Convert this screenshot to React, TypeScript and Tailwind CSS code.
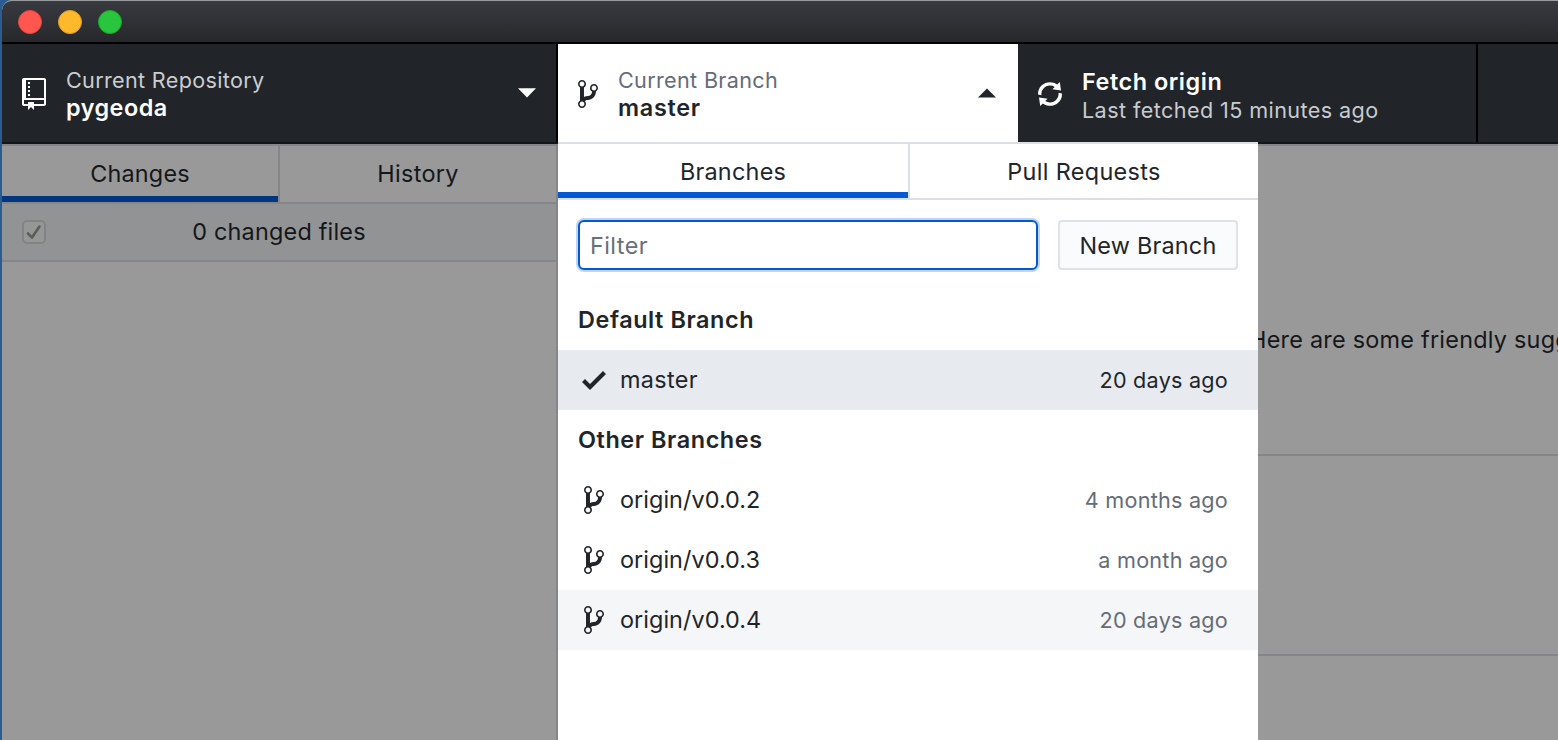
import type { ReactNode } from "react";

const paths = {
  repo: "M4 9H3V8h1v1zm0-3H3v1h1V6zm0-2H3v1h1V4zm0-2H3v1h1V2zm8-1v12c0 .55-.45 1-1 1H6v2l-1.5-1.5L3 16v-2H1c-.55 0-1-.45-1-1V1c0-.55.45-1 1-1h10c.55 0 1 .45 1 1zm-1 10H1v2h2v-1h3v1h5v-2zm0-10H2v9h9V1z",
  branch:
    "M10 5c0-1.11-.89-2-2-2a1.993 1.993 0 0 0-1 3.72v.3c-.02.52-.23.98-.63 1.38-.4.4-.86.61-1.38.63-.83.02-1.48.16-2 .45V4.72a1.993 1.993 0 0 0-1-3.72C.88 1 0 1.89 0 3a2 2 0 0 0 1 1.72v6.56c-.59.35-1 .99-1 1.72 0 1.11.89 2 2 2 1.11 0 2-.89 2-2 0-.53-.2-1-.53-1.36.09-.06.48-.41.59-.47.25-.11.56-.17.94-.17 1.05-.05 1.95-.45 2.75-1.25S8.95 7.77 9 6.73h-.02C9.59 6.37 10 5.73 10 5zM2 1.8c.66 0 1.2.55 1.2 1.2 0 .65-.55 1.2-1.2 1.2C1.35 4.2.8 3.65.8 3c0-.65.55-1.2 1.2-1.2zm0 12.41c-.66 0-1.2-.55-1.2-1.2 0-.65.55-1.2 1.2-1.2.65 0 1.2.55 1.2 1.2 0 .65-.55 1.2-1.2 1.2zm6-8c-.66 0-1.2-.55-1.2-1.2 0-.65.55-1.2 1.2-1.2.65 0 1.2.55 1.2 1.2 0 .65-.55 1.2-1.2 1.2z",
  sync: "M10.24 7.4a4.15 4.15 0 0 1-1.2 3.6 4.346 4.346 0 0 1-5.41.54L4.8 10.4.5 9.8l.6 4.2 1.31-1.26c2.36 1.74 5.7 1.57 7.84-.54a5.876 5.876 0 0 0 1.74-4.46l-1.75-.34zM2.96 5a4.346 4.346 0 0 1 5.41-.54L7.2 5.6l4.3.6-.6-4.2-1.31 1.26c-2.36-1.74-5.7-1.57-7.85.54C.5 5.03-.06 6.65.01 8.26l1.75.35A4.17 4.17 0 0 1 2.96 5z",
  check: "M12 5l-8 8-4-4 1.5-1.5L4 10l6.5-6.5L12 5z",
};

function Icon({ name, className = "" }: { name: keyof typeof paths; className?: string }) {
  const w = name === "branch" ? 10 : 12;
  return (
    <svg width={w * 2} height={32} viewBox={`0 0 ${w} 16`} fill="currentColor" className={`shrink-0 ${className}`}>
      <path fillRule="evenodd" d={paths[name]} />
    </svg>
  );
}

function Caret({ up = false }: { up?: boolean }) {
  return (
    <svg width="18" height="10" viewBox="0 0 18 10" fill="currentColor" className="mt-[44px]">
      <path d={up ? "M0 9.5 9 .5l9 9z" : "M0 .3l9 9.2 9-9.2z"} />
    </svg>
  );
}

function Section({ children }: { children: ReactNode }) {
  return <h2 className="h-[60px] pl-5 text-[23.4px] leading-[59px] font-semibold tracking-[0.58px]">{children}</h2>;
}

interface BranchRowProps {
  icon: "check" | "branch";
  name: string;
  date: string;
  nameClass: string;
  className: string;
}

function BranchRow({ icon, name, date, nameClass, className }: BranchRowProps) {
  return (
    <li className={`flex h-[60px] items-center pr-[30px] pl-6 ${className}`}>
      <span className={icon === "branch" ? "flex w-[38px] pl-[2px]" : "flex w-[38px]"}>
        <Icon name={icon} />
      </span>
      <span className={`flex-1 pb-[2px] leading-[57px] text-[#212529] ${nameClass}`}>{name}</span>
      <span className="text-[21.6px] leading-[60px] tracking-[0.24px]">{date}</span>
    </li>
  );
}

export default function App() {
  return (
    <div className="h-[740px] w-[1558px] overflow-hidden bg-[#2b5c91] pl-[2px] font-['Inter',sans-serif] text-[23.4px] leading-[29px] whitespace-nowrap text-[#212529]">
      <div className="flex h-full flex-col overflow-hidden rounded-tl-[10px] bg-[#999999]">
        <header className="flex h-11 shrink-0 items-center gap-4 rounded-tl-[10px] border-t border-b-2 border-t-[#999c9f] border-b-black bg-linear-to-b from-[#383a40] to-[#27282c] pl-4">
          <span className="size-6 rounded-full border border-[#e2463f] bg-[#ff5750]" />
          <span className="size-6 rounded-full border border-[#dfa023] bg-[#fdb92b]" />
          <span className="size-6 rounded-full border border-[#1aab29] bg-[#29c53c]" />
        </header>

        <nav className="flex h-[98px] shrink-0 bg-[#212428] text-white">
          <div className="flex w-[556px] border-r-2 border-black pr-5 pl-5">
            <Icon name="repo" className="mt-[34px]" />
            <div className="ml-5 flex-1 pt-[23px]">
              <p className="text-[21.6px] leading-[26px] tracking-[0.32px] text-[#cacdd1]">Current Repository</p>
              <p className="font-semibold tracking-[0.5px]">pygeoda</p>
            </div>
            <Caret />
          </div>
          <div className="flex w-[460px] bg-white pr-[22px] pl-5 text-[#212529]">
            <Icon name="branch" className="mt-[34px]" />
            <div className="ml-5 flex-1 pt-[23px]">
              <p className="text-[21.6px] leading-[26px] tracking-[0.33px] text-[#646c78]">Current Branch</p>
              <p className="font-semibold tracking-[0.7px]">master</p>
            </div>
            <Caret up />
          </div>
          <div className="flex w-[460px] border-r-2 border-black pl-5">
            <Icon name="sync" className="mt-[34px]" />
            <div className="ml-5 pt-[23px]">
              <p className="font-semibold tracking-[0.55px]">Fetch origin</p>
              <p className="text-[21.6px] leading-[28px] tracking-[0.41px] text-[#c8cbcf]">
                Last fetched 15 minutes ago
              </p>
            </div>
          </div>
        </nav>

        <div className="relative flex flex-1 border-t-2 border-[#121519]">
          <aside className="w-[556px] border-t-2 border-r-2 border-[#85858a] text-[#14171a]">
            <div className="flex h-[58px] border-b-2 border-[#85858a] text-center">
              <div className="w-[276px] border-b-[6px] border-[#003580] pt-[13px] tracking-[0.2px]">Changes</div>
              <div className="flex-1 border-l-2 border-[#85858a] pt-[13px] tracking-[0.35px]">History</div>
            </div>
            <div className="flex h-[58px] items-center border-b-2 border-[#85858a] bg-[#929395] px-5">
              <span className="flex size-6 items-center justify-center rounded-[5px] border-2 border-[#828383] bg-[#959696]">
                <svg width="16" height="16" viewBox="0 0 16 16" fill="none" stroke="#5b5c5c" strokeWidth="2.6">
                  <path d="M2 9.5 6 13.5 13.5 2.5" strokeLinecap="round" strokeLinejoin="round" />
                </svg>
              </span>
              <span className="flex-1 pr-6 pb-px text-center leading-[55px] tracking-[0.21px]">0 changed files</span>
            </div>
          </aside>

          <main className="flex-1 overflow-hidden border-t-2 border-[#85858a] text-[#14171a]">
            <div className="h-[310px] border-b-2 border-[#85858a] pt-[179px] pl-[691px] tracking-[0.25px]">
              Here are some friendly suggestions
            </div>
            <div className="h-[200px] border-b-2 border-[#85858a]" />
          </main>

          <section className="absolute -top-[2px] left-[556px] h-[598px] w-[700px] border-t-2 border-[#dce0e5] bg-white">
            <div className="flex h-14 border-b-2 border-[#dce0e5] text-center">
              <div className="w-[350px] border-b-[6px] border-[#0459d2] pt-[13px] tracking-[0.25px]">Branches</div>
              <div className="flex-1 border-l-2 border-[#dce0e5] pt-[13px] tracking-[0.35px]">Pull Requests</div>
            </div>
            <div className="flex gap-5 px-5 pt-5 pb-5">
              <input
                placeholder="Filter"
                className="h-[50px] w-[460px] rounded-[6px] border-2 border-[#0459d2] bg-white px-[10px] pt-[1px] tracking-[0.45px] ring-2 ring-[#bfd5f3] outline-none placeholder:text-[#66707a]"
              />
              <button className="h-[50px] w-[180px] rounded-[4px] border-2 border-[#dfe2e6] bg-[#fafbfc] pt-[1px] tracking-[0.22px]">
                New Branch
              </button>
            </div>
            <Section>Default Branch</Section>
            <ul>
              <BranchRow
                icon="check"
                name="master"
                date="20 days ago"
                nameClass="tracking-[0.35px]"
                className="bg-[#e7eaef]"
              />
            </ul>
            <Section>Other Branches</Section>
            <ul className="text-[#646c78]">
              {[
                ["origin/v0.0.2", "4 months ago", ""],
                ["origin/v0.0.3", "a month ago", ""],
                ["origin/v0.0.4", "20 days ago", "bg-[#f5f6f8]"],
              ].map(([name, date, bg]) => (
                <BranchRow
                  key={name}
                  icon="branch"
                  name={name}
                  date={date}
                  nameClass="tracking-[0.05px]"
                  className={`${bg} [&_svg]:text-[#212529]`}
                />
              ))}
            </ul>
          </section>
        </div>
      </div>
    </div>
  );
}
